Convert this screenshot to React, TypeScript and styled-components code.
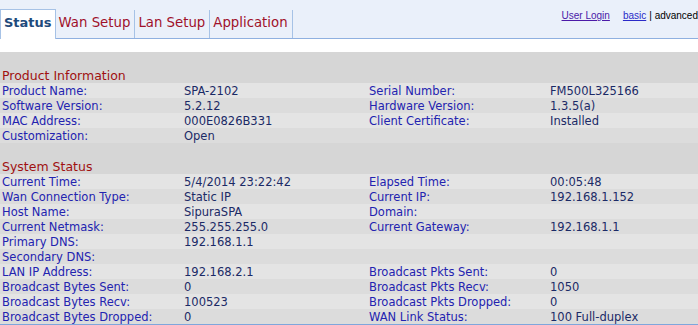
import React from "react";
import styled, { createGlobalStyle } from "styled-components";

const Global = createGlobalStyle`
  html, body { margin: 0; padding: 0; background: #d6d6d6; }
  body { font-family: Verdana, "DejaVu Sans", sans-serif; }
`;

const Page = styled.div`
  width: 698px;
  height: 325px;
  overflow: hidden;
  background: #d6d6d6;
`;

const Header = styled.div`
  height: 38px;
  background: #eaf0fa;
  border-bottom: 1px solid #8fb0e0;
  display: flex;
  align-items: flex-end;
  justify-content: space-between;
`;

const Tabs = styled.div`
  display: flex;
  align-items: flex-end;
  height: 29px;
`;

const Tab = styled.div<{ $active?: boolean }>`
  display: flex;
  align-items: center;
  box-sizing: border-box;
  padding: 0 ${(p) => (p.$active ? "3px" : "4px")} 4px 3px;
  font-size: ${(p) => (p.$active ? "13px" : "13.3px")};
  font-weight: ${(p) => (p.$active ? "bold" : "normal")};
  color: ${(p) => (p.$active ? "#1f4a7c" : "#a0102a")};
  background: ${(p) => (p.$active ? "#ffffff" : "transparent")};
  border-left: ${(p) => (p.$active ? "1px solid #a6c2e6" : "none")};
  border-top: ${(p) => (p.$active ? "1px solid #a6c2e6" : "none")};
  border-right: 1px solid #a6c2e6;
  margin-bottom: ${(p) => (p.$active ? "-1px" : "0")};
  height: ${(p) => (p.$active ? "30px" : "28px")};
`;

const Links = styled.div`
  align-self: flex-start;
  margin-top: 10px;
  font-family: Tahoma, "Liberation Sans", Arial, sans-serif;
  font-size: 10px;
  color: #000;
  display: flex;
  white-space: nowrap;
`;

const Link = styled.a<{ $visited?: boolean }>`
  color: ${(p) => (p.$visited ? "#4b1aa8" : "#2a2ac8")};
  text-decoration: underline;
  margin-right: ${(p) => (p.$visited ? "13px" : "3px")};
`;

const Spacer = styled.div`
  height: 13px;
  background: #ffffff;
`;

const Body = styled.div`
  background: #d6d6d6;
  border-bottom: 1px solid #7fa6dc;
`;

const Gap = styled.div`
  height: 15px;
`;

const Heading = styled.div`
  height: 16px;
  line-height: 18px;
  padding-left: 2px;
  font-size: 12.5px;
  color: #a01010;
`;

const Row = styled.div<{ $alt?: boolean }>`
  display: grid;
  grid-template-columns: 182px 185px 181px 1fr;
  height: 15px;
  line-height: 17px;
  font-size: 11.5px;
  background: ${(p) => (p.$alt ? "#dcdcdc" : "#e4e4e4")};
  white-space: nowrap;
  overflow: hidden;
`;

const Label = styled.div`
  padding-left: 2px;
  color: #2323b0;
`;

const Value = styled.div`
  padding-left: 2px;
  color: #1b2a66;
`;

type R = [string, string, string?, string?];

const product: R[] = [
  ["Product Name:", "SPA-2102", "Serial Number:", "FM500L325166"],
  ["Software Version:", "5.2.12", "Hardware Version:", "1.3.5(a)"],
  ["MAC Address:", "000E0826B331", "Client Certificate:", "Installed"],
  ["Customization:", "Open", "", ""],
];

const system: R[] = [
  ["Current Time:", "5/4/2014 23:22:42", "Elapsed Time:", "00:05:48"],
  ["Wan Connection Type:", "Static IP", "Current IP:", "192.168.1.152"],
  ["Host Name:", "SipuraSPA", "Domain:", ""],
  ["Current Netmask:", "255.255.255.0", "Current Gateway:", "192.168.1.1"],
  ["Primary DNS:", "192.168.1.1", "", ""],
  ["Secondary DNS:", "", "", ""],
  ["LAN IP Address:", "192.168.2.1", "Broadcast Pkts Sent:", "0"],
  ["Broadcast Bytes Sent:", "0", "Broadcast Pkts Recv:", "1050"],
  ["Broadcast Bytes Recv:", "100523", "Broadcast Pkts Dropped:", "0"],
  ["Broadcast Bytes Dropped:", "0", "WAN Link Status:", "100 Full-duplex"],
];

const Rows = ({ data }: { data: R[] }) => (
  <>
    {data.map((r, i) => (
      <Row key={i} $alt={i % 2 === 1}>
        <Label>{r[0]}</Label>
        <Value>{r[1]}</Value>
        <Label>{r[2]}</Label>
        <Value>{r[3]}</Value>
      </Row>
    ))}
  </>
);

export default function App() {
  return (
    <Page>
      <Global />
      <Header>
        <Tabs>
          <Tab $active>Status</Tab>
          <Tab>Wan Setup</Tab>
          <Tab>Lan Setup</Tab>
          <Tab>Application</Tab>
        </Tabs>
        <Links>
          <Link $visited href="#">User Login</Link>
          <Link href="#">basic</Link>
          <span>| advanced</span>
        </Links>
      </Header>
      <Spacer />
      <Body>
        <Gap />
        <Heading>Product Information</Heading>
        <Rows data={product} />
        <Gap />
        <Heading>System Status</Heading>
        <Rows data={system} />
      </Body>
    </Page>
  );
}
